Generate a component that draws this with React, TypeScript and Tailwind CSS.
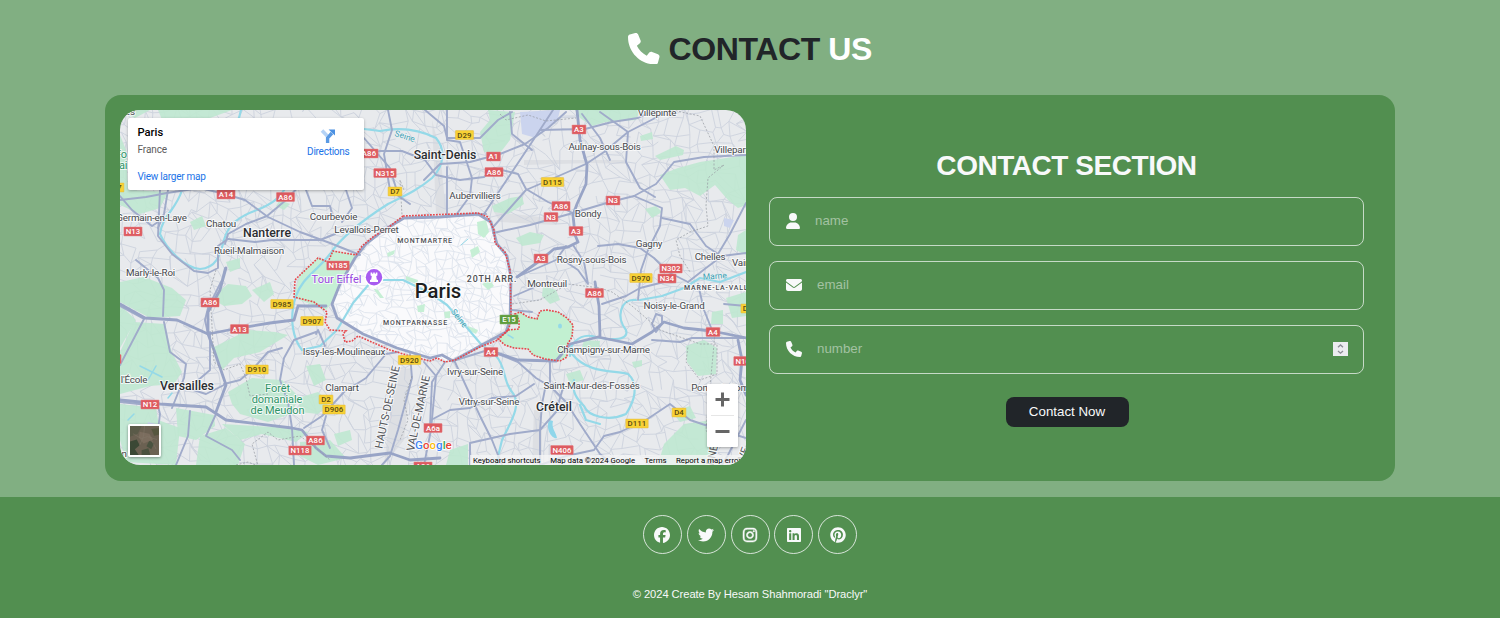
import React from "react";
import {
  FaEnvelope,
  FaFacebook,
  FaInstagram,
  FaLinkedin,
  FaPhone,
  FaPinterest,
  FaTwitter,
  FaUser,
} from "react-icons/fa6";

/* ---------- map data ---------- */

const boulogne =
  "M300 275L318 258L328 262L333 251L356 255L340 285L333 300L326 310L300 300L294 297Z";

const parks = [
  "M120 135L126 150L128 190L168 192L160 208L140 214L120 205Z",
  "M158 110L232 110L210 118L180 119L165 127Z",
  "M120 110L150 110L135 118Z",
  "M488 110L515 112L510 140L500 153L484 152L480 132L490 120Z",
  "M575 110L640 110L636 120L606 122L592 126L580 118Z",
  "M492 206L510 198L522 196L524 204L508 214L494 212Z",
  "M655 156L676 146L684 150L683 155L660 160Z",
  "M660 175L678 168L700 162L746 155V205L738 208L728 200L715 185L700 196L685 188L670 190Z",
  "M516 238L530 232L544 235L540 243L522 246Z",
  "M645 209L656 206L662 212L652 218Z",
  boulogne,
  "M218 292L228 284L246 286L252 296L242 304L224 306L214 300Z",
  "M252 290L270 282L274 294L264 302Z",
  "M120 282L144 277L172 288L186 300L180 316L150 318L120 302Z",
  "M120 305L136 320L120 348Z",
  "M134 322L165 324L171 350L182 372L174 384L150 386L120 394V352Z",
  "M212 348L248 330L275 332L288 335L260 352L234 358L222 370Z",
  "M228 392L252 378L282 380L300 398L290 414L268 422L240 414L232 404Z",
  "M306 366L320 364L326 380L314 386Z",
  "M298 398L318 392L330 402L318 414L300 412Z",
  "M120 404L156 408L158 420L180 428L176 465L126 462L120 440Z",
  "M176 408L214 415L215 426L196 440L178 436Z",
  "M200 436L226 428L245 444L238 465L196 465Z",
  "M222 424L290 428L308 432L296 442L262 434L240 440Z",
  "M334 434L350 430L352 440L338 446Z",
  "M300 442L330 440L346 458L318 465L300 456Z",
  "M686 346L704 340L717 348L716 374L698 376L687 362Z",
  "M664 444L684 424L712 420L720 432L712 465H658Z",
  "M672 412L690 406L696 418L680 422Z",
  "M584 340L600 341L599 350L582 347Z",
  "M543 286L556 290L560 300L550 304L542 296Z",
  "M712 312L723 310L723 324L711 324Z",
  "M450 450L468 444V465H446Z",
  "M538 118L546 112L556 118L546 126Z",
  "M640 136L652 132L653 139L641 141Z",
  "M226 262L240 258L240 268L230 272Z",
  "M190 222L202 216L206 226L194 230Z",
  "M726 298L746 292V316L732 318Z",
  "M566 374L580 370L584 380L570 384Z",
  "M738 235L746 230V255L736 250Z",
  "M632 362L642 360L642 366L634 368Z",
  "M280 200L290 204L284 210L276 206Z",
];

const blueZones = [
  "M520 112L560 110L558 118L536 138L522 134Z",
  "M724 218L734 220L730 228L724 226Z",
  "M148 422L156 424L152 436L146 430Z",
];

const waters = [
  "M182 190C176 210 162 216 160 234C166 248 184 268 200 269C216 268 220 256 224 240C228 224 240 216 257 210C272 204 280 198 284 190",
  "M364 129L380 131C400 127 420 130 436 138C446 150 444 166 432 178C418 190 404 196 388 204C366 218 342 236 330 254C316 272 302 278 296 296C288 320 294 340 302 350",
  "M241 110L239 118L232 128",
  "M302 350L320 346L337 330L353 303L370 283L383 280L403 280L430 293L447 305L463 323L480 343L496 356C506 366 503 382 512 392C522 404 512 420 502 440L496 465",
  "M572 354C588 374 614 370 628 374C640 384 634 402 626 414C608 422 588 416 584 406C576 398 572 392 574 380",
  "M636 300C620 298 616 318 626 330C630 342 606 340 592 336C578 334 568 346 570 356",
  "M640 300L662 296L684 288L700 278L720 282L746 272",
  "M580 405L586 420L600 424",
];

const majors = [
  "M120 200L146 197L167 193L200 188L225 194L245 200L268 217L300 232L330 243L360 255",
  "M160 190L158 236L172 254L194 271L208 273L218 268L218 246L228 239",
  "M120 196L132 210L152 226L158 222",
  "M168 190L164 214L158 228",
  "M300 185L286 200L267 216L246 224L228 234L225 244",
  "M228 239L255 242L272 240L300 240L320 240L335 234",
  "M346 190L352 208L342 222",
  "M306 190L312 206L330 206L332 214",
  "M364 155L380 151L402 151L425 160L436 175L460 180L484 177L494 168L518 174L526 189L548 202L573 213",
  "M388 110L392 130L384 154L390 190L410 204",
  "M364 138L390 168L396 188",
  "M425 110L444 126L447 138L480 138L498 120L512 112",
  "M447 110L447 140L460 142L472 178L470 196L456 215L486 214",
  "M447 167V216",
  "M566 112L548 128L525 144L500 154L470 162L440 164L424 180",
  "M553 110L530 145L508 178L484 214",
  "M510 112L512 134L532 150",
  "M540 130L585 129L612 122L638 118L655 110",
  "M663 114L628 132L604 152L586 164L554 178L526 190L494 226",
  "M582 114L600 138L610 160",
  "M600 112L628 132L626 162L640 188L655 197",
  "M493 233L530 225L573 213L610 202L634 196L656 184L674 162L704 157L746 155",
  "M634 196L662 208L660 226L648 250L641 270L638 300",
  "M662 218L690 224L706 246L718 254L730 234L746 203",
  "M573 245L584 262L588 284L578 270L566 262",
  "M598 246L618 244L640 248L654 258L668 272L688 282",
  "M517 277L556 260L566 246",
  "M120 365L144 319L120 306",
  "M163 316L164 290L158 278L136 260",
  "M164 322L170 352L186 364L184 378L172 408",
  "M210 332V370L196 382",
  "M208 334L205 320L208 308L222 280L225 268",
  "M120 402L158 406L160 414L158 430",
  "M190 411L188 436L176 465",
  "M216 414L206 436L232 450L240 460",
  "M224 384L240 380L252 370L268 352L282 348",
  "M190 389L206 394L226 384",
  "M292 428L294 465",
  "M292 428L288 402L280 380L284 358L294 340L316 332",
  "M304 428L322 416L344 392L366 378L386 354L398 352",
  "M326 416L322 430L330 448",
  "M325 346L318 330L316 334",
  "M410 354L412 378L404 408L398 430L390 456L382 465",
  "M424 362L436 376L431 430L424 465",
  "M445 362L432 382L430 426",
  "M454 360L466 386L480 416L492 440L502 465",
  "M431 420L450 410L470 408L492 398L516 396L534 384",
  "M470 465V443L510 434L540 430L540 465",
  "M456 360L488 350L518 362L536 378L546 384L542 404L540 430L556 412L564 384L548 384",
  "M550 362V382",
  "M548 384L566 402L580 424L600 454L614 465",
  "M540 465L566 456L594 450L604 436L620 432L646 420L670 404L690 420L708 426L746 438",
  "M652 340L680 342L692 338L746 338",
  "M656 332L652 324L656 314L662 316L662 324Z",
  "M602 304L626 296L640 288L664 282",
  "M698 284L704 310L712 330",
  "M724 304L746 306",
  "M688 282L706 268L722 256L746 253",
  "M746 420L728 455L722 465",
  "M514 296L542 284",
  "M512 310L532 312",
];

const motorways = [
  "M577 110L580 140L587 165L586 184L577 204L573 215L575 235L578 242L568 247L554 249L538 262L517 277",
  "M120 304L145 318L177 320L208 334L234 329L270 323L294 320L298 306L326 306",
  "M120 400L160 404L206 407L226 420L292 428L302 430L316 448L326 456L350 458L390 453L410 460L440 458",
  "M226 268L220 290L208 312L208 334L214 350L226 385L216 412",
  "M488 350L518 360L556 361L570 344L598 337L632 344L652 332L664 322L684 328L712 331L746 338",
  "M595 282L599 306L600 336",
  "M738 340L742 360L740 380L746 395",
];

const ringRoad =
  "M404 218L440 217L478 214L491 222L497 244L507 256L511 278L510 320L506 332L480 346L453 361L442 355L430 358L397 348L363 334L337 318L332 304L340 284L355 258L366 244L384 230Z";

const parisFill =
  "M403 217L480 214L494 230L496 245L507 255L511 280L509 325L480 345L447 361L415 354L360 335L338 315L333 300L340 285L355 262L375 237Z";

const vincennes =
  "M508 330L519 329L519 320L515 314L520 312L528 317L537 319L540 311L547 310L558 312L567 318L573 325L572 337L567 345L567 357L560 361L545 359L533 355L528 349L514 348L505 345L498 339Z";

const borders = [
  "M403 216L478 213L488 217L494 230L495 243L505 252L510 270L511 310L511 322L508 330",
  "M508 330L498 340L480 347L455 360L445 362L437 358L430 361L410 356L390 350L358 336L352 341L345 342L343 334L346 331L330 330L325 322L327 312L314 302L294 297L295 280L300 275L318 258L328 262L333 251L356 255L362 246L374 236L385 230L403 216",
  vincennes,
];

const dashed = [
  "M500 114L506 120L528 115L546 121L576 118",
  "M672 110L700 116L714 146L714 170L724 165",
  "M724 165L708 178L706 206L708 226L690 232L676 240L680 256L690 272",
  "M512 304L540 300L568 284L600 288L612 292L632 306L660 330L700 344L717 344L717 374L700 380L686 362L688 346",
  "M404 190L400 180L402 215",
  "M216 270L210 290L214 362L224 370L240 364L246 378L250 396L268 394",
  "M236 465L248 462L258 466L252 444L268 432L278 440L300 436L316 448L330 460",
  "M412 376L404 400L408 420L400 440",
  "M715 330L714 344L706 430L712 440",
];

/* Fine street mesh: a jittered lattice with some of its edges left out. */
function buildStreets(
  x0: number,
  y0: number,
  x1: number,
  y1: number,
  step: number,
  keep: number,
  start: number,
) {
  let seed = start;
  const rnd = () => {
    seed = (seed * 16807) % 2147483647;
    return seed / 2147483647;
  };
  const cols = Math.ceil((x1 - x0) / step) + 1;
  const rows = Math.ceil((y1 - y0) / step) + 1;
  const pts: number[][][] = [];
  for (let r = 0; r < rows; r++) {
    pts.push([]);
    for (let c = 0; c < cols; c++) {
      pts[r].push([
        x0 + c * step + (rnd() - 0.5) * step * 1.1,
        y0 + r * step + (rnd() - 0.5) * step * 1.1,
      ]);
    }
  }
  let d = "";
  const edge = (a: number[], b: number[]) => {
    d += `M${a[0].toFixed(1)} ${a[1].toFixed(1)}L${b[0].toFixed(1)} ${b[1].toFixed(1)}`;
  };
  for (let r = 0; r < rows; r++) {
    for (let c = 0; c < cols; c++) {
      if (c + 1 < cols && rnd() < keep) edge(pts[r][c], pts[r][c + 1]);
      if (r + 1 < rows && rnd() < keep) edge(pts[r][c], pts[r + 1][c]);
      if (r + 1 < rows && c + 1 < cols && rnd() < keep * 0.35)
        edge(pts[r][c], pts[r + 1][c + 1]);
    }
  }
  return d;
}

const streets = buildStreets(112, 102, 754, 474, 10.5, 0.74, 71);
const cityStreets = buildStreets(325, 205, 520, 370, 7, 0.8, 19);

type Label = [string, number, number, number?];

const towns: Label[] = [
  ["es", 130, 115],
  ["Villepinte", 657, 116],
  ["Aulnay-sous-Bois", 604.5, 150],
  ["Villeparisis", 737, 153],
  ["Aubervilliers", 475, 199],
  ["Bondy", 588, 217],
  ["Gagny", 649, 247],
  ["Chelles", 710, 260],
  ["Vaires", 745, 266],
  ["Rosny-sous-Bois", 591.5, 263],
  ["Germain-en-Laye", 151.5, 221],
  ["Chatou", 221, 227],
  ["Courbevoie", 333.5, 220],
  ["Levallois-Perret", 366.5, 233],
  ["Rueil-Malmaison", 249, 254],
  ["Marly-le-Roi", 150.5, 276],
  ["Montreuil", 547, 287],
  ["Noisy-le-Grand", 674, 309],
  ["Champigny-sur-Marne", 603.5, 353],
  ["Issy-les-Moulineaux", 344, 355],
  ["Ivry-sur-Seine", 475, 375],
  ["Saint-Maur-des-Fossés", 591.5, 389],
  ["Vitry-sur-Seine", 489, 405],
  ["Clamart", 342, 391],
  ["l'École", 134, 382.5],
  ["Pontault-Com", 720, 391],
  ["n", 124, 457],
];

const cities: Label[] = [
  ["Saint-Denis", 445, 159, 12.2],
  ["Nanterre", 267, 236.5, 12.3],
  ["Versailles", 187, 390, 12.3],
  ["Créteil", 554, 411, 12.3],
];

const districts: Label[] = [
  ["MONTMARTRE", 425, 242.5, 7],
  ["20TH ARR.", 492, 281.5, 8.8],
  ["MONTPARNASSE", 415.5, 324.5, 7],
  ["MARNE-LA-VALLÉE", 721, 290, 7],
];

const shields: [string, number, number, "r" | "y" | "g"][] = [
  ["A86", 369, 153.5, "r"],
  ["N315", 385, 173, "r"],
  ["A14", 226, 194.5, "r"],
  ["A86", 285.5, 197, "r"],
  ["N13", 133, 231.5, "r"],
  ["N185", 338, 265.5, "r"],
  ["D7", 395, 191.5, "y"],
  ["D29", 464.5, 135, "y"],
  ["A1", 493.5, 156.5, "r"],
  ["A86", 494, 172, "r"],
  ["A3", 579, 129.5, "r"],
  ["D115", 552.5, 182, "y"],
  ["A86", 561, 206, "r"],
  ["N3", 551, 217, "r"],
  ["N3", 613, 200.5, "r"],
  ["A3", 576, 231, "r"],
  ["A3", 541, 258.5, "r"],
  ["N302", 671, 268.5, "r"],
  ["N34", 667, 278.5, "r"],
  ["D970", 641, 278, "y"],
  ["A86", 210, 302.5, "r"],
  ["D985", 282, 304, "y"],
  ["D907", 312, 321, "y"],
  ["A13", 239.5, 329, "r"],
  ["D910", 257, 369.5, "y"],
  ["D920", 409.5, 360, "y"],
  ["A4", 491, 352, "r"],
  ["E15", 509, 319.5, "g"],
  ["A86", 594.5, 293, "r"],
  ["A4", 713, 332, "r"],
  ["N104", 745, 361, "r"],
  ["D2", 326, 399.5, "y"],
  ["D906", 334, 409.5, "y"],
  ["N12", 150, 404.5, "r"],
  ["A86", 315.5, 440.5, "r"],
  ["N118", 300, 450.5, "r"],
  ["A6a", 433, 428, "r"],
  ["A86", 423, 466.5, "r"],
  ["N406", 562, 450, "r"],
  ["D111", 637, 423.5, "y"],
  ["D4", 679, 412.5, "y"],
  ["D51", 750, 308.5, "y"],
  ["D7", 117, 187.5, "y"],
  ["A12", 112, 359, "r"],
];

const shieldFill = { r: "#dd5b60", y: "#f8d135", g: "#5d9c3d" };
const shieldEdge = { r: "#e57a7e", y: "#e3b93b", g: "#78ae5c" };

function ParisMap() {
  return (
    <svg
      viewBox="120 110 626 355"
      className="block h-[355px] w-[626px] font-[Roboto,sans-serif]"
      aria-label="Map of Paris"
    >
      <rect x="120" y="110" width="626" height="355" fill="#e8eaed" />
      <g fill="#dddfe3">
        <path d="M524 160L626 160V164L590 163L524 165Z" />
        <path d="M494 212L560 219L556 225L500 222Z" />
        <path d="M432 120L440 150L446 214L436 214Z" />
        <path d="M398 370L412 368L404 440L384 465L388 430Z" />
        <path d="M534 410L542 410V465H532Z" />
      </g>
      <path d={streets} fill="none" stroke="#cdd2de" strokeWidth="0.9" />
      <g fill="#bfe8d0" fillOpacity="0.9">
        {parks.map((d) => (
          <path key={d} d={d} />
        ))}
      </g>
      <g fill="#cbd4ee">
        {blueZones.map((d) => (
          <path key={d} d={d} />
        ))}
      </g>
      <path d={parisFill} fill="#fafafc" />
      <clipPath id="city">
        <path d={parisFill} />
      </clipPath>
      <path
        d={cityStreets}
        fill="none"
        stroke="#dfe4ed"
        strokeWidth="0.9"
        clipPath="url(#city)"
      />
      <g fill="#c6efd5">
        <path d={boulogne} />
        <path d="M477 222L486 220L489 232L484 238L478 234Z" />
        <path d="M470 250L478 246L480 252L472 258Z" />
        <path d="M482 284L490 280L494 286L488 290Z" />
        <path d="M417 306L425 304L424 312L418 312Z" />
        <path d="M444 312L450 311L450 318L445 318Z" />
        <path d="M373 288L378 290L384 298L380 298Z" />
        <path d="M406 276L418 280L417 284L406 280Z" />
        <path d="M468 326L478 330L476 334L468 330Z" />
        <path d="M387 253L395 250L394 254L388 257Z" />
      </g>
      <path d={vincennes} fill="#c2f0d1" />
      <g
        fill="none"
        stroke="#94d9e8"
        strokeWidth="2.2"
        strokeLinejoin="round"
        strokeLinecap="round"
      >
        {waters.map((d) => (
          <path key={d} d={d} />
        ))}
        <path d="M461 245L468 239" strokeWidth="1" />
        <path
          d="M140 366L162 377M148 380L156 366M168 398L172 393M128 420L134 414M508 335L513 338"
          strokeWidth="1.5"
        />
      </g>
      <path
        d="M549 420C545 430 553 440 557 438C556 432 551 428 553 421Z"
        fill="#8fd6ea"
      />
      <ellipse cx="560" cy="326" rx="2" ry="2.6" fill="#94d9e8" />
      <g
        fill="none"
        stroke="#a0abca"
        strokeWidth="1.9"
        strokeLinejoin="round"
        strokeLinecap="round"
      >
        {majors.map((d) => (
          <path key={d} d={d} />
        ))}
      </g>
      <g
        fill="none"
        stroke="#98a4c6"
        strokeWidth="2.8"
        strokeLinejoin="round"
        strokeLinecap="round"
      >
        {motorways.map((d) => (
          <path key={d} d={d} />
        ))}
        <path d={ringRoad} />
      </g>
      <g fill="none" stroke="#9599a1" strokeWidth="0.7" strokeDasharray="2 1.6">
        {dashed.map((d) => (
          <path key={d} d={d} />
        ))}
      </g>
      <g fill="none" stroke="#e5484d" strokeWidth="1.6" strokeDasharray="1.8 1.2">
        {borders.map((d) => (
          <path key={d} d={d} />
        ))}
      </g>

      <g fontSize="7.8" fontWeight="500" textAnchor="middle" letterSpacing="0.1">
        {shields.map(([name, x, y, kind]) => {
          const w = name.length * 4.3 + 5.2;
          return (
            <g key={`${name}-${x}-${y}`}>
              <rect
                x={x - w / 2}
                y={y - 4.4}
                width={w}
                height="8.8"
                rx="0.4"
                fill={shieldFill[kind]}
                stroke={shieldEdge[kind]}
                strokeWidth="0.5"
              />
              <text x={x} y={y + 2.8} fill={kind === "y" ? "#574a14" : "#ffffff"}>
                {name}
              </text>
            </g>
          );
        })}
      </g>

      <g
        textAnchor="middle"
        stroke="#ffffff"
        strokeWidth="2"
        strokeOpacity="0.75"
        strokeLinejoin="round"
        paintOrder="stroke"
      >
        <g fontSize="9.8" fill="#46484c" letterSpacing="-0.18">
          {towns.map(([name, x, y]) => (
            <text key={name} x={x} y={y}>
              {name}
            </text>
          ))}
        </g>
        <g fontWeight="500" fill="#2b2d31">
          {cities.map(([name, x, y, size]) => (
            <text key={name} x={x} y={y} fontSize={size}>
              {name}
            </text>
          ))}
          <text x="438" y="297.5" fontSize="20.3" fill="#1c1d20">
            Paris
          </text>
        </g>
        <g fontWeight="500" fill="#4d4f54" letterSpacing="0.8">
          {districts.map(([name, x, y, size]) => (
            <text key={name} x={x} y={y} fontSize={size}>
              {name}
            </text>
          ))}
        </g>
        <g fontSize="11" fill="#55575c">
          <text transform="translate(391 408) rotate(-78)">HAUTS-DE-SEINE</text>
          <text transform="translate(422 414) rotate(-78)">VAL-DE-MARNE</text>
          <text transform="translate(714 464) rotate(-78)">MARNE</text>
          <text transform="translate(747 455) rotate(-70)">VE</text>
        </g>
        <g fontSize="11" fill="#2f9468" letterSpacing="-0.1">
          <text x="277.5" y="392">Forêt</text>
          <text x="277" y="403">domaniale</text>
          <text x="277.5" y="414">de Meudon</text>
          <text x="121" y="158">Fo</text>
          <text x="120" y="169">Sai</text>
        </g>
        <g fontSize="8.5" fill="#3a9fb3" strokeWidth="0.6">
          <text transform="translate(404 139) rotate(18)">Seine</text>
          <text transform="translate(457 320) rotate(52)">Seine</text>
          <text transform="translate(715 279) rotate(-4)">Marne</text>
        </g>
        <text x="336.5" y="283" fontSize="11" fill="#9747e0">
          Tour Eiffel
        </text>
      </g>

      {/* landmark pin */}
      <path d="M374 289L369 285.5A9.6 9.6 0 1 1 379 285.5Z" fill="#ffffff" />
      <circle cx="374" cy="277.3" r="8.2" fill="#a85cf0" />
      <path
        d="M370.6 272.6H372.2V273.8H373.2V272.6H374.8V273.8H375.8V272.6H377.4V275.4L376.2 276L376.8 279.4L378 280V282H370V280L371.2 279.4L371.8 276L370.6 275.4Z"
        fill="#ffffff"
      />

      {/* provider wordmark */}
      <text
        x="415"
        y="449"
        fontSize="11.6"
        stroke="#ffffff"
        strokeWidth="1.6"
        paintOrder="stroke"
        fontWeight="500"
      >
        <tspan fill="#4285f4">G</tspan>
        <tspan fill="#ea4335">o</tspan>
        <tspan fill="#fbbc04">o</tspan>
        <tspan fill="#4285f4">g</tspan>
        <tspan fill="#34a853">l</tspan>
        <tspan fill="#ea4335">e</tspan>
      </text>
    </svg>
  );
}

function SatelliteThumb() {
  return (
    <svg viewBox="0 0 30 30" className="block size-full" aria-hidden="true">
      <rect width="30" height="30" fill="#6b6152" />
      <path d="M0 0H12L8 8L0 11Z" fill="#5a5a48" />
      <path d="M0 16L7 14L10 20L5 24L9 30H0Z" fill="#3b4835" />
      <path d="M20 15L25 18L22 24L17 21Z" fill="#4a5340" />
      <path d="M22 3L30 2V9L25 10Z" fill="#56573f" />
      <path d="M12 25L19 23L21 30H12Z" fill="#49513e" />
      <path d="M10 6L20 8L24 14L14 18L9 12Z" fill="#7b6d5e" />
      <path
        d="M3 8L12 13L18 11L28 14M15 0L14 11L10 20M20 10L27 24"
        stroke="#84796a"
        strokeWidth="0.5"
        fill="none"
      />
    </svg>
  );
}

function MapPanel() {
  return (
    <div className="relative h-[355px] w-[626px] shrink-0 overflow-hidden rounded-[20px] font-[Roboto,sans-serif]">
      <ParisMap />

      <div className="absolute top-2 left-2 flex h-[72px] w-[236px] justify-between rounded-[2px] bg-white pl-[9.5px] pr-[14.5px] shadow-[0_1px_3px_rgba(0,0,0,0.3)]">
        <div className="flex flex-col">
          <span className="mt-[7.5px] text-[11.2px] leading-[14px] font-medium text-black">
            Paris
          </span>
          <span className="mt-[3px] text-[10px] leading-[14px] tracking-[-0.1px] text-[#5b5b5b]">
            France
          </span>
          <span className="mt-[13px] text-[10px] leading-[14px] tracking-[-0.25px] text-[#1a73e8]">
            View larger map
          </span>
        </div>
        <div className="flex flex-col items-center pt-[10px]">
          <svg viewBox="0 0 16 16" className="size-4" aria-hidden="true">
            <path d="M2 2.6L7 7.8" stroke="#b5d3f6" strokeWidth="3.6" />
            <path
              d="M7.6 15V9.8L12 5"
              stroke="#5a9ae4"
              strokeWidth="3.4"
              fill="none"
            />
            <path d="M8.6 1.4H15V7.6Z" fill="#4a90e2" />
          </svg>
          <span className="mt-[1px] text-[10px] leading-[14px] tracking-[-0.25px] text-[#1a73e8]">
            Directions
          </span>
        </div>
      </div>

      <div className="absolute top-[314px] left-2 size-[33px] overflow-hidden rounded-[2px] border-2 border-white shadow-[0_1px_3px_rgba(0,0,0,0.4)]">
        <SatelliteThumb />
      </div>

      <div className="absolute top-[274px] left-[587px] flex h-[63px] w-[31px] flex-col items-center rounded-[1px] bg-white shadow-[0_1px_3px_rgba(0,0,0,0.3)]">
        <svg viewBox="0 0 31 31" className="h-[31px] w-[31px]" aria-hidden="true">
          <path
            d="M8.5 15.5H22.5M15.5 8.5V22.5"
            stroke="#666666"
            strokeWidth="3"
          />
        </svg>
        <div className="h-px w-[23px] bg-[#e6e6e6]" />
        <svg viewBox="0 0 31 31" className="h-[31px] w-[31px]" aria-hidden="true">
          <path d="M8.5 15.5H22.5" stroke="#666666" strokeWidth="3" />
        </svg>
      </div>

      <div className="absolute right-0 bottom-0 flex h-[10px] w-[276px] items-center gap-[9.5px] bg-[#f5f5f5]/75 pt-px pl-[3px] text-[7.8px] leading-[10px] whitespace-nowrap text-black">
        <span>Keyboard shortcuts</span>
        <span>Map data ©2024 Google</span>
        <span>Terms</span>
        <span>Report a map error</span>
      </div>
    </div>
  );
}

function Field({
  icon,
  label,
  stepper,
}: {
  icon: React.ReactNode;
  label: string;
  stepper?: boolean;
}) {
  return (
    <label className="flex h-[49px] w-[595px] items-center rounded-lg border border-[#f8f9fa]/70 pr-[15px] pb-px pl-4 text-[#f8f9fa]">
      {icon}
      <input
        type="text"
        placeholder={label}
        className="mb-[2px] ml-[15px] min-w-0 flex-1 bg-transparent text-[13.333px] leading-[15px] outline-none placeholder:text-[#a3c2a2]"
      />
      {stepper && (
        <span className="flex h-[14px] w-[15px] items-center justify-center bg-[#ececf0]">
          <svg
            viewBox="0 0 15 14"
            className="h-[14px] w-[15px]"
            fill="none"
            stroke="#8b8b95"
            strokeWidth="1.3"
            aria-hidden="true"
          >
            <path d="M5 5.2L7.5 2.9L10 5.2M5 8.9L7.5 11.2L10 8.9" />
          </svg>
        </span>
      )}
    </label>
  );
}

const socials = [
  { name: "Facebook", Icon: FaFacebook, weight: 0 },
  { name: "Twitter", Icon: FaTwitter, weight: 0 },
  { name: "Instagram", Icon: FaInstagram, weight: 16 },
  { name: "LinkedIn", Icon: FaLinkedin, weight: 0 },
  { name: "Pinterest", Icon: FaPinterest, weight: 0 },
];

export default function App() {
  return (
    <div className="flex h-[618px] w-full flex-col overflow-hidden bg-[#81af82] font-['Liberation_Sans',Arial,sans-serif]">
      <main className="flex h-[497px] flex-col items-center">
        <h1 className="mt-[30px] flex h-[37px] items-center text-[32px] leading-[37px] font-bold tracking-[-0.4px] text-[#212529]">
          <FaPhone className="mr-[9px] size-[31.5px] text-white" />
          <span className="mt-[2px] whitespace-pre">
            CONTACT <span className="text-white">US</span>
          </span>
        </h1>

        <section className="mt-[28px] flex h-[386px] w-[1290px] rounded-2xl bg-[#528f50] pt-[15px] pl-[15px]">
          <MapPanel />
          <form className="ml-[23px] flex w-[595px] flex-col items-center">
            <h2 className="mt-[40px] text-[28px] leading-8 font-bold tracking-[-0.45px] whitespace-nowrap text-[#f8f9fa]">
              CONTACT SECTION
            </h2>
            <div className="mt-[15px] flex flex-col gap-[15px]">
              <Field label="name" icon={<FaUser className="h-4 w-[14px]" />} />
              <Field label="email" icon={<FaEnvelope className="size-4" />} />
              <Field label="number" stepper icon={<FaPhone className="size-4" />} />
            </div>
            <button
              type="button"
              className="mt-[23px] ml-px h-[30px] w-[123px] rounded-lg bg-[#212529] pb-px text-[13.333px] leading-[15px] text-[#f8f9fa]"
            >
              Contact Now
            </button>
          </form>
        </section>
      </main>

      <footer className="flex h-[121px] flex-col items-center bg-[#528f50] text-[#f8f9fa]">
        <div className="mt-[18px] flex gap-[4.8px]">
          {socials.map(({ name, Icon, weight }) => (
            <a
              key={name}
              aria-label={name}
              className="flex size-[39px] items-center justify-center rounded-full border border-[#f8f9fa]/80"
            >
              <Icon className="size-4" strokeWidth={weight} />
            </a>
          ))}
        </div>
        <p className="mt-[33px] text-[11.2px] leading-[14px] tracking-[-0.07px]">
          © 2024 Create By Hesam Shahmoradi "Draclyr"
        </p>
      </footer>
    </div>
  );
}
